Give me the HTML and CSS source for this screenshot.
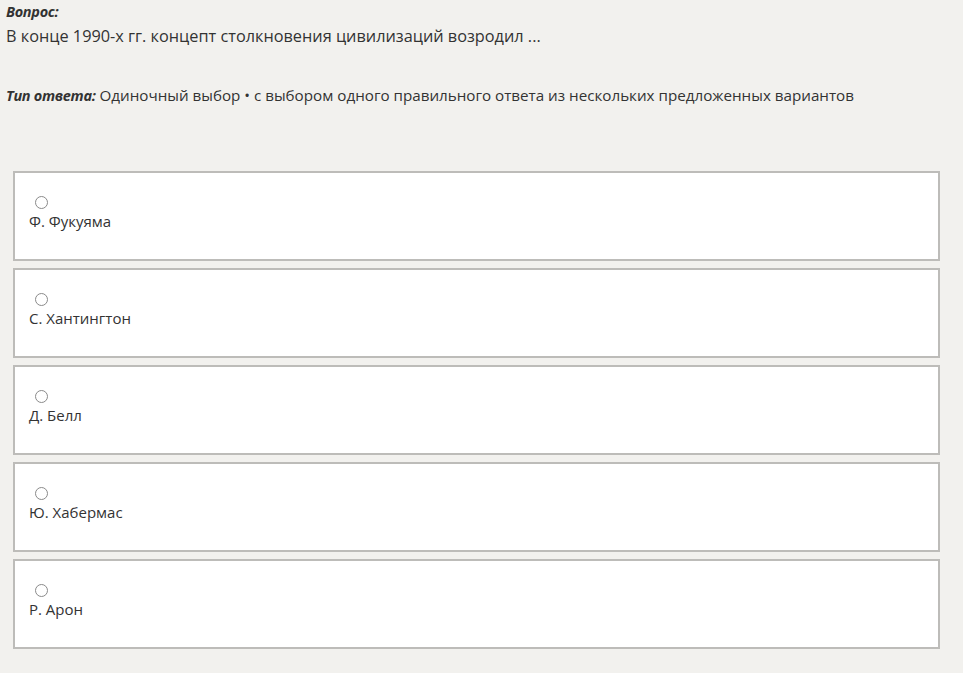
FILE: index.html
```html
<!DOCTYPE html>
<html lang="ru">
<head>
  <meta charset="UTF-8" />
  <title>Вопрос</title>
  <link rel="stylesheet" href="styles.css">
</head>
<body>
  <div class="question">
    <div class="q-label">Вопрос:</div>
    <div class="q-text">В конце 1990-х гг. концепт столкновения цивилизаций возродил ...</div>
  </div>

  <div class="answer-type">
    <span class="q-label">Тип ответа:</span> Одиночный выбор • с выбором одного правильного ответа из нескольких предложенных вариантов
  </div>

  <form class="options">
    <label class="option">
      <input type="radio" name="answer" />
      <span>Ф. Фукуяма</span>
    </label>
    <label class="option">
      <input type="radio" name="answer" />
      <span>С. Хантингтон</span>
    </label>
    <label class="option">
      <input type="radio" name="answer" />
      <span>Д. Белл</span>
    </label>
    <label class="option">
      <input type="radio" name="answer" />
      <span>Ю. Хабермас</span>
    </label>
    <label class="option">
      <input type="radio" name="answer" />
      <span>Р. Арон</span>
    </label>
  </form>
</body>
</html>
```

FILE: styles.css
```css
body {
  font-family: "Open Sans", "Noto Sans", sans-serif;
  background: #f2f1ee;
  color: #333;
  margin: 0;
  padding: 2px 6px;
}
.q-label { font-weight: bold; font-style: italic; font-size: 14.5px; letter-spacing: -0.3px; }
.q-text { font-size: 16.3px; margin-top: 4px; }
.answer-type { font-size: 15.2px; margin-top: 38px; }
.options {
  display: flex;
  flex-direction: column;
  gap: 7px;
  margin: 66px 0 0 7px;
  width: 927px;
}
.option {
  display: flex;
  flex-direction: column;
  align-items: flex-start;
  height: 90px;
  box-sizing: border-box;
  background: #fff;
  border: 2px solid #bdbcb9;
  padding: 23px 14px 0;
  font-size: 15px;
}
.option input {
  appearance: none;
  width: 13px;
  height: 13px;
  margin: 0 0 2px 6px;
  border: 1px solid #8a8a8a;
  border-radius: 50%;
  background: #fff;
}
```
